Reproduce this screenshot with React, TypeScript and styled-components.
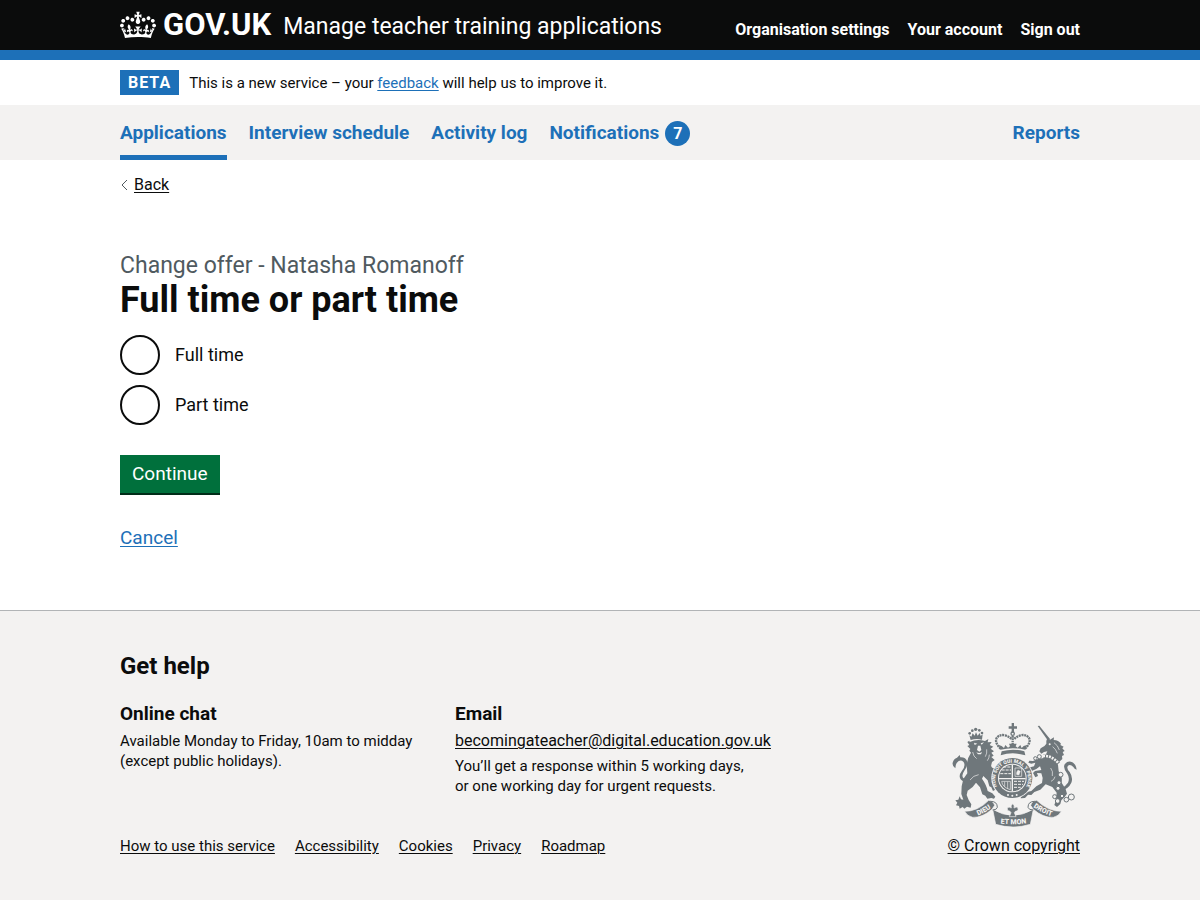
import React from 'react';
import styled, { createGlobalStyle } from 'styled-components';

const color = {
  ink: '#0b0c0c',
  blue: '#1d70b8',
  grey: '#f3f2f1',
  muted: '#505a5f',
  green: '#00703c',
  arms: '#6f777b',
};

const GlobalStyle = createGlobalStyle`
  *, *::before, *::after { box-sizing: border-box; }
  body {
    margin: 0;
    background: ${color.grey};
    color: ${color.ink};
    font-family: Roboto, "Liberation Sans", sans-serif;
    font-size: 15px;
    line-height: 20px;
  }
  h1, h2, h3, p, ul, fieldset, legend { margin: 0; padding: 0; border: 0; }
  ul { list-style: none; }
`;

const Container = styled.div`
  max-width: 960px;
  margin: 0 auto;
  @media (max-width: 1020px) {
    margin: 0 30px;
  }
`;

const Link = styled.a<{ $tone?: 'ink' | 'blue' }>`
  color: ${p => (p.$tone === 'ink' ? color.ink : color.blue)};
  text-decoration: underline;
  text-decoration-thickness: 1px;
  text-underline-offset: 2px;
`;

const Header = styled.header`
  background: ${color.ink};
  border-bottom: 10px solid ${color.blue};
`;

const HeaderRow = styled(Container)`
  display: flex;
  justify-content: space-between;
  flex-wrap: wrap;
  min-height: 50px;
`;

const Brand = styled.div`
  display: flex;
  align-items: flex-start;
  gap: 12px;
  padding-top: 9px;
`;

const LogoLink = styled.a`
  display: flex;
  gap: 7px;
  color: #fff;
  font-size: 31px;
  font-weight: 700;
  line-height: 32px;
  text-decoration: none;
`;

const CrownIcon = styled.svg`
  width: 36px;
  height: 28px;
  margin-top: 2px;
`;

const ServiceLink = styled.a`
  color: #fff;
  font-size: 23px;
  line-height: 36px;
  text-decoration: none;
`;

const AccountNav = styled.nav`
  display: flex;
  gap: 18px;
  padding-top: 20px;
`;

const AccountLink = styled.a`
  color: #fff;
  font-size: 16px;
  font-weight: 700;
  text-decoration: none;
`;

const PhaseArea = styled.div`
  background: #fff;
`;

const PhaseBanner = styled(Container)`
  display: flex;
  align-items: center;
  gap: 10px;
  padding: 10px 0;
`;

const PhaseTag = styled.strong`
  padding: 0 8px;
  background: ${color.blue};
  color: #fff;
  font-size: 16px;
  line-height: 25px;
  letter-spacing: 1px;
`;

const PrimaryBar = styled.div`
  background: ${color.grey};
`;

const PrimaryNav = styled.nav`
  display: flex;
  justify-content: space-between;
`;

const PrimaryList = styled.ul`
  display: flex;
  gap: 22px;
`;

const PrimaryLink = styled.a<{ $current?: boolean }>`
  display: flex;
  align-items: center;
  gap: 6px;
  height: 55px;
  border-bottom: 5px solid ${p => (p.$current ? color.blue : 'transparent')};
  padding-top: 6px;
  color: ${color.blue};
  font-size: 19px;
  font-weight: 700;
  text-decoration: none;
  white-space: nowrap;
`;

const Count = styled.span`
  width: 25px;
  border-radius: 50%;
  background: ${color.blue};
  color: #fff;
  font-size: 16px;
  line-height: 25px;
  text-align: center;
`;

const Page = styled.div`
  background: #fff;
  padding: 15px 0 60px;
`;

const BackLink = styled(Link)`
  display: inline-flex;
  align-items: center;
  gap: 6px;
  font-size: 16px;
`;

const Chevron = styled.svg`
  width: 8px;
  height: 12px;
`;

const Main = styled.main`
  padding-top: 55px;
`;

const Heading = styled.h1`
  font-size: 36px;
  font-weight: 700;
  line-height: 38px;
`;

const Caption = styled.span`
  display: block;
  color: ${color.muted};
  font-size: 23px;
  font-weight: 400;
  line-height: 30px;
`;

const Options = styled.div`
  display: grid;
  gap: 10px;
  padding: 16px 0 30px;
`;

const Option = styled.div`
  display: flex;
  align-items: center;
  font-size: 18px;
`;

const Radio = styled.input`
  appearance: none;
  width: 40px;
  height: 40px;
  margin: 0;
  border: 2px solid ${color.ink};
  border-radius: 50%;
  background: #fff;
  cursor: pointer;
  &:checked {
    box-shadow: inset 0 0 0 8px #fff;
    background: ${color.ink};
  }
`;

const OptionLabel = styled.label`
  padding: 10px 15px;
  cursor: pointer;
`;

const SubmitButton = styled.button`
  display: block;
  border: 0;
  padding: 9px 12px;
  background: ${color.green};
  box-shadow: 0 2px 0 #002d18;
  color: #fff;
  font-family: inherit;
  font-size: 19px;
  line-height: 20px;
  cursor: pointer;
`;

const CancelRow = styled.p`
  padding-top: 32px;
  font-size: 19px;
  line-height: 25px;
`;

const Footer = styled.footer`
  border-top: 1px solid #b1b4b6;
  padding: 40px 0;
`;

const FooterTitle = styled.h2`
  padding-bottom: 20px;
  font-size: 24px;
  line-height: 30px;
`;

const FooterBody = styled.div`
  display: flex;
  flex-wrap: wrap;
  justify-content: space-between;
  align-items: flex-end;
  gap: 30px;
`;

const HelpColumns = styled.div`
  display: grid;
  grid-template-columns: 305px 305px;
  gap: 30px;
  padding-bottom: 35px;
`;

const HelpTitle = styled.h3`
  padding-bottom: 5px;
  font-size: 19px;
  line-height: 25px;
`;

const HelpText = styled.p<{ $large?: boolean }>`
  padding-bottom: 5px;
  font-size: ${p => (p.$large ? 16 : 15)}px;
  line-height: 20px;
  white-space: nowrap;
`;

const FooterLinks = styled.ul`
  display: flex;
  flex-wrap: wrap;
  gap: 20px;
`;

const Copyright = styled(Link)`
  display: grid;
  justify-items: center;
  gap: 8px;
  font-size: 16px;
`;

const ArmsIcon = styled.svg`
  width: 128px;
  height: 106px;
`;

const Crown = () => (
  <CrownIcon viewBox="0 0 132 97" aria-hidden="true">
    <path
      fill="#fff"
      fillRule="evenodd"
      d="M25 30.2c3.5 1.5 7.7-.2 9.1-3.7 1.5-3.6-.2-7.8-3.9-9.2-3.6-1.4-7.6.3-9.1 3.9-1.4 3.5.3 7.5 3.9 9zM9 39.5c3.6 1.5 7.8-.2 9.2-3.7 1.5-3.6-.2-7.8-3.9-9.1-3.6-1.5-7.6.2-9.1 3.8-1.4 3.5.3 7.5 3.8 9zM4.4 57.2c3.5 1.5 7.7-.2 9.1-3.8 1.5-3.6-.2-7.7-3.9-9.1-3.5-1.5-7.6.3-9.1 3.8-1.4 3.5.3 7.6 3.9 9.1zm38.3-21.4c3.5 1.5 7.7-.2 9.1-3.8 1.5-3.6-.2-7.7-3.9-9.1-3.6-1.5-7.6.3-9.1 3.8-1.3 3.6.4 7.7 3.9 9.1zm64.4-5.6c-3.6 1.5-7.8-.2-9.1-3.7-1.5-3.6.2-7.8 3.8-9.2 3.6-1.4 7.7.3 9.2 3.9 1.3 3.5-.4 7.5-3.9 9zm15.9 9.3c-3.6 1.5-7.7-.2-9.1-3.7-1.5-3.6.2-7.8 3.7-9.1 3.6-1.5 7.7.2 9.2 3.8 1.5 3.5-.3 7.5-3.8 9zm4.7 17.7c-3.6 1.5-7.8-.2-9.2-3.8-1.5-3.6.2-7.7 3.9-9.1 3.6-1.5 7.7.3 9.2 3.8 1.3 3.5-.4 7.6-3.9 9.1zM89.3 35.8c-3.6 1.5-7.8-.2-9.2-3.8-1.4-3.6.2-7.7 3.9-9.1 3.6-1.5 7.7.3 9.2 3.8 1.4 3.6-.3 7.7-3.9 9.1zM69.7 17.7l8.9 4.7V9.3l-8.9 2.8c-.2-.3-.5-.6-.9-.9L72.4 0H59.6l3.5 11.2c-.3.3-.6.5-.9.9l-8.8-2.8v13.1l8.8-4.7c.3.3.6.7.9.9l-5 15.4v.1c-.2.8-.4 1.6-.4 2.4 0 4.1 3.1 7.5 7 8.1h.2c.3 0 .7.1 1 .1.4 0 .7 0 1-.1h.2c4-.6 7.1-4.1 7.1-8.1 0-.8-.1-1.7-.4-2.4V34l-5.1-15.4c.4-.2.7-.6 1-.9zM66 92.8c16.9 0 32.8 1.1 47.1 3.2 4-16.9 8.9-26.7 14-33.5l-9.6-3.4c1 4.9 1.1 7.2 0 10.2-1.5-1.4-3-4.3-4.2-8.7L108.6 76c2.8-2 5-3.2 7.5-3.3-4.4 9.4-10 11.9-13.6 11.2-4.3-.8-6.3-4.6-5.6-7.9 1-4.7 5.7-5.9 8-.5 4.3-8.7-3-11.4-7.6-8.8 7.1-7.2 7.9-13.5 2.1-21.1-8 6.1-8.1 12.3-4.5 20.8-4.7-5.4-12.1-2.5-9.5 6.2 3.4-5.2 7.9-2 7.2 3.1-.6 4.3-6.4 7.8-13.5 7.2-10.3-.9-10.9-8-11.2-13.8 2.5-.5 7.1 1.8 11 7.3L80.2 60c-4.1 4.4-8 5.3-12.3 5.4 1.4-4.4 8-11.6 8-11.6H55.5s6.4 7.2 7.9 11.6c-4.2-.1-8-1-12.3-5.4l1.4 16.4c3.9-5.5 8.5-7.7 10.9-7.3-.3 5.8-.9 12.8-11.1 13.8-7.2.6-12.9-2.9-13.5-7.2-.7-5 3.8-8.3 7.1-3.1 2.7-8.7-4.6-11.6-9.4-6.2 3.7-8.5 3.6-14.7-4.6-20.8-5.8 7.6-5 13.9 2.2 21.1-4.7-2.6-11.9.1-7.7 8.8 2.3-5.5 7.1-4.2 8.1.5.7 3.3-1.3 7.1-5.7 7.9-3.5.7-9-1.8-13.5-11.2 2.5.1 4.7 1.3 7.5 3.3l-4.7-15.4c-1.2 4.4-2.7 7.2-4.3 8.7-1.1-3-.9-5.3 0-10.2l-9.5 3.4c5 6.9 9.9 16.7 14 33.5 14.8-2.1 30.8-3.2 47.7-3.2z"
    />
  </CrownIcon>
);

const RoyalArms = () => (
  <ArmsIcon viewBox="30 22 384 318" role="img" aria-label="Royal coat of arms">
    <defs>
      <path id="garter" d="M178 225 A49 49 0 1 1 252 225" />
      <path id="scrollLeft" d="M104 306 Q134 296 162 274" />
      <path id="scrollMid" d="M173 325 Q218 332 268 325" />
      <path id="scrollRight" d="M272 271 Q304 297 344 307" />
    </defs>
    {/* lion with its crown and tail, then the imperial crown */}
    <g fill={color.arms}>
      <path d="M92 76l-4-14 6 4 4-10 6 7 4-10 5 10 6-8 3 9 6-5-2 16q-17-4-34 1z" />
      <circle cx="89" cy="56" r="4" />
      <circle cx="97" cy="48" r="4" />
      <circle cx="107" cy="44" r="5" />
      <circle cx="118" cy="47" r="4" />
      <circle cx="126" cy="55" r="4" />
      <path d="M89 82q22-10 46-3l10-6-2 10 12-1-6 9 11 5-8 6 10 8-8 4 7 9-7 4 10 9-8 6-2 8q-2 6 4 10 12 4 18 18l-7 4q-3 18 2 30l-10 1 5 12-7 4-5-11-6-3-5-18-13-13-4 8q14 20 17 37l14 7 9 10-4 6-8-2-12 2-6-9-9-4-7-21-12-14-10 13-15 11-3 13 6 15 8 13-2 10-11-3-8 6-5-5-9 5-2-8-9-2 4-8-6-7 9-2 4-10 4 9 7 1-6-17 1-23 5-22 12-17-2-25q2-22 13-37l-5-6 3-5-9-9 6-3-6-9 6-4z" />
      <path d="M82 204q-12-2-19-9-9-11 2-25 14-18 5-29-10-8-20 4-4 6-4 16-10-6-8-17 3-12 13-15l8-8 2 7q16-1 21 13 2 12-9 27-9 13-4 21 5 6 15 7z" />
      <path d="M182 122q36-12 74 0l-3-12q-34-10-68 0z" />
      <path d="M181 105q37-9 75 0l5-14-10 3-6 6-4-9-8 8-6-4 3-8h-23l3 8-6 4-8-8-4 9-7-6-9-3z" />
      <path d="M215 25h7v10h9v7h-9v12h-7V42h-9v-7h9z" />
    </g>
    <g fill="none" stroke={color.arms}>
      <path d="M182 102q-19-18-12-32 9-12 25-8 14 4 20 12M255 102q19-18 12-32-9-12-25-8-14 4-20 12" strokeWidth="7" strokeDasharray="6 2" />
      <path d="M218 64v26" strokeWidth="7" strokeDasharray="5 2" />
      <circle cx="218" cy="57" r="5" strokeWidth="4" />
    </g>
    {/* unicorn */}
    <g fill={color.arms}>
      <path d="M293 34l5-1 32 40-7 4z" />
      <path d="M319 79l4-12 7 8 12-7-1 8q15 1 22 11l-2 4 10 5-4 5 7 8-6 3 4 9-6 3 1 9-9 8q-12-10-35-16l-5-6 4-9-10 2-8 5-6-7 4-9q13-6 17-14z" />
      <path d="M318 128q22 2 36 22l2 20q12 14 9 34l12 20 4 13-7 10-10 10-3 11-10 9-8-6 5-14 1-14 1-9-13-17-20-8-16 16-18 7-9 9-10-1-9 10-13 1 2-11 20-9 10-2 15-14 17-10 2-15-4-14-13-1 3 9-8 4-7-13 6-6 19-3-4-11-11 8-16 7-7-6 5-6 11-3 4-11-12 3-9-3 3-6 11 1 17-7 16-2q2-8 11-11z" />
      <path d="M362 222q14-6 22-18 6-14-2-27-14-16-8-28 10-13 23-6 11 6 13 22-7-1-10-8-9-10-16-4-6 7 5 19 11 16 5 32-8 18-32 25z" />
    </g>
    {/* garter and quartered shield */}
    <circle cx="217" cy="190" r="63" fill={color.grey} />
    <circle cx="217" cy="190" r="60" fill={color.arms} />
    <circle cx="217" cy="190" r="43" fill={color.grey} />
    <circle cx="217" cy="190" r="40" fill={color.arms} />
    <g stroke={color.grey} fill="none">
      <path d="M217 150v80M177 192h80" strokeWidth="4" />
      <path d="M185 166h28M181 177h32M190 157h23M222 200h30M222 209h27M222 218h20" strokeWidth="3" strokeDasharray="9 3" />
      <path d="M225 160h20v25h-20z" strokeWidth="2" />
      <path d="M230 180q-2-8 4-14l7 4-4 11z" fill={color.grey} />
      <path d="M185 200q2 18 26 25v-25zM194 201v15M203 201v21" strokeWidth="2" />
    </g>
    <text fill={color.grey} fontSize="15" fontWeight="900" fontFamily="Roboto, sans-serif">
      <textPath href="#garter" startOffset="50%" textAnchor="middle">HONI SOIT QUI MAL Y PENSE</textPath>
    </text>
    <g fill={color.grey}>
      <circle cx="204" cy="241" r="3" />
      <circle cx="217" cy="243" r="3" />
      <circle cx="230" cy="241" r="3" />
      <circle cx="329" cy="89" r="3" />
    </g>
    {/* mane, coronet collar and chain */}
    <path d="M342 84q12 8 16 22M338 96q10 8 14 20" fill="none" stroke={color.grey} strokeWidth="2" />
    <path d="M310 126q26-2 45 21" fill="none" stroke={color.arms} strokeWidth="13" />
    <path d="M309 124q26-2 46 21" fill="none" stroke={color.grey} strokeWidth="8" strokeDasharray="6 3" />
    <g fill={color.grey} stroke={color.arms} strokeWidth="3">
      <circle cx="286" cy="131" r="5" />
      <circle cx="298" cy="126" r="6" />
      <circle cx="362" cy="180" r="7" />
      <circle cx="357" cy="204" r="6" />
      <circle cx="354" cy="221" r="6" />
      <circle cx="344" cy="246" r="6" />
      <circle cx="353" cy="259" r="7" />
      <circle cx="379" cy="255" r="7" />
      <circle cx="394" cy="247" r="9" />
      <circle cx="366" cy="244" r="5" />
    </g>
    {/* face and muscle lines */}
    <path d="M102 84l10 3-8 4zM122 86l10-3-7 7zM114 93h7l3 13-6 5-7-5zM109 113q9 5 17-1l-3 7h-9z" fill={color.grey} />
    <path d="M98 112q2 14 12 20M140 104q2 12-4 22M148 120q0 10-6 18M90 196q10-14 26-16M332 160q8 10 5 24M345 186q-2 10-12 14" fill="none" stroke={color.grey} strokeWidth="2" />
    {/* motto scroll */}
    <g fill={color.arms} stroke={color.grey} strokeWidth="2">
      <path d="M158 284q60 36 122 0l-9 45q-52 16-104 0z" />
      <path d="M74 290q40 0 72-33 13 1 18 15l-8 12q-30 26-58 24-16-3-24-18z" />
      <path d="M364 290q-40 0-74-33-13 1-18 15l8 12q30 26 60 24 16-3 24-18z" />
      <path d="M218 267q7 6 4 13 8-6 12 1 2 8-8 9l-3 4 5 12h-20l5-12-3-4q-10-1-8-9 4-7 12-1-3-7 4-13z" />
    </g>
    <path d="M152 260q20 0 20 18-2 8-14 8M284 260q-20 0-20 18 2 8 16 8" fill="none" stroke={color.arms} strokeWidth="3" />
    <g fill={color.grey} fontSize="21" fontWeight="900" fontFamily="Roboto, sans-serif" textAnchor="middle">
      <text><textPath href="#scrollLeft" startOffset="50%">DIEU</textPath></text>
      <text><textPath href="#scrollMid" startOffset="50%">ET MON</textPath></text>
      <text><textPath href="#scrollRight" startOffset="50%">DROIT</textPath></text>
    </g>
  </ArmsIcon>
);

const accountLinks = ['Organisation settings', 'Your account', 'Sign out'];
const sections: { label: string; current?: boolean; count?: number }[] = [
  { label: 'Applications', current: true },
  { label: 'Interview schedule' },
  { label: 'Activity log' },
  { label: 'Notifications', count: 7 },
];
const studyModes = [
  { id: 'full-time', label: 'Full time' },
  { id: 'part-time', label: 'Part time' },
];
const footerLinks = ['How to use this service', 'Accessibility', 'Cookies', 'Privacy', 'Roadmap'];

export default function App() {
  return (
    <>
      <GlobalStyle />
      <Header>
        <HeaderRow>
          <Brand>
            <LogoLink href="#"><Crown />GOV.UK</LogoLink>
            <ServiceLink href="#">Manage teacher training applications</ServiceLink>
          </Brand>
          <AccountNav aria-label="Account">
            {accountLinks.map(label => <AccountLink key={label} href="#">{label}</AccountLink>)}
          </AccountNav>
        </HeaderRow>
      </Header>
      <PhaseArea>
        <PhaseBanner>
          <PhaseTag>BETA</PhaseTag>
          <span>This is a new service – your <Link href="#">feedback</Link> will help us to improve it.</span>
        </PhaseBanner>
      </PhaseArea>
      <PrimaryBar>
        <Container>
          <PrimaryNav aria-label="Primary">
            <PrimaryList>
              {sections.map(({ label, current, count }) => (
                <li key={label}>
                  <PrimaryLink href="#" $current={current} aria-current={current ? 'page' : undefined}>
                    {label}
                    {count !== undefined && <Count>{count}</Count>}
                  </PrimaryLink>
                </li>
              ))}
            </PrimaryList>
            <PrimaryLink href="#">Reports</PrimaryLink>
          </PrimaryNav>
        </Container>
      </PrimaryBar>
      <Page>
        <Container>
          <BackLink href="#" $tone="ink">
            <Chevron viewBox="0 0 8 12" aria-hidden="true">
              <path d="M7 1L2 6l5 5" fill="none" stroke={color.muted} />
            </Chevron>
            Back
          </BackLink>
          <Main>
            <form onSubmit={e => e.preventDefault()}>
              <fieldset>
                <legend>
                  <Heading>
                    <Caption>Change offer - Natasha Romanoff</Caption>
                    Full time or part time
                  </Heading>
                </legend>
                <Options>
                  {studyModes.map(({ id, label }) => (
                    <Option key={id}>
                      <Radio type="radio" name="study-mode" id={id} value={id} />
                      <OptionLabel htmlFor={id}>{label}</OptionLabel>
                    </Option>
                  ))}
                </Options>
              </fieldset>
              <SubmitButton type="submit">Continue</SubmitButton>
            </form>
            <CancelRow><Link href="#">Cancel</Link></CancelRow>
          </Main>
        </Container>
      </Page>
      <Footer>
        <Container>
          <FooterTitle>Get help</FooterTitle>
          <FooterBody>
            <div>
              <HelpColumns>
                <div>
                  <HelpTitle>Online chat</HelpTitle>
                  <HelpText>Available Monday to Friday, 10am to midday<br />(except public holidays).</HelpText>
                </div>
                <div>
                  <HelpTitle>Email</HelpTitle>
                  <HelpText $large><Link href="#" $tone="ink">becomingateacher@digital.education.gov.uk</Link></HelpText>
                  <HelpText>You’ll get a response within 5 working days,<br />or one working day for urgent requests.</HelpText>
                </div>
              </HelpColumns>
              <FooterLinks>
                {footerLinks.map(label => <li key={label}><Link href="#" $tone="ink">{label}</Link></li>)}
              </FooterLinks>
            </div>
            <Copyright href="#" $tone="ink"><RoyalArms />© Crown copyright</Copyright>
          </FooterBody>
        </Container>
      </Footer>
    </>
  );
}
